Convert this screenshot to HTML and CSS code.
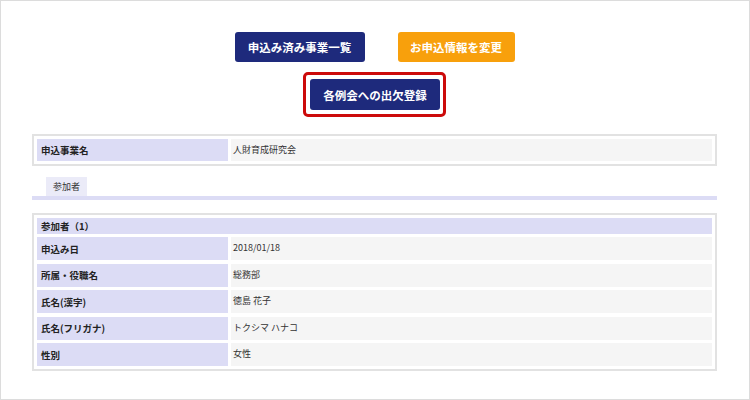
FILE: index.html
```html
<!DOCTYPE html>
<html lang="ja">
<head>
<meta charset="utf-8">
<link rel="stylesheet" href="styles.css">
</head>
<body>
<div class="frame">
  <div class="btn-row">
    <a class="btn btn-navy btn-list">申込み済み事業一覧</a>
    <a class="btn btn-orange">お申込情報を変更</a>
  </div>
  <div class="btn-row btn-row2">
    <div class="highlight">
      <a class="btn btn-navy btn-attend">各例会への出欠登録</a>
    </div>
  </div>

  <div class="box box-event">
    <div class="grid">
      <div class="label">申込事業名</div>
      <div class="value">人財育成研究会</div>
    </div>
  </div>

  <div class="tabs">
    <div class="tab">参加者</div>
  </div>
  <div class="tab-line"></div>

  <div class="box box-members">
    <div class="head">参加者（1）</div>
    <div class="grid rows">
      <div class="label">申込み日</div>
      <div class="value">2018/01/18</div>
      <div class="label">所属・役職名</div>
      <div class="value">総務部</div>
      <div class="label">氏名(漢字)</div>
      <div class="value">徳島 花子</div>
      <div class="label">氏名(フリガナ)</div>
      <div class="value">トクシマ ハナコ</div>
      <div class="label">性別</div>
      <div class="value">女性</div>
    </div>
  </div>
</div>
</body>
</html>
```

FILE: styles.css
```css
html, body {
  margin: 0;
  padding: 0;
  background: #fff;
}
body {
  font-family: "Noto Sans CJK JP", "Noto Sans", sans-serif;
  color: #333;
}
.frame {
  width: 750px;
  height: 400px;
  box-sizing: border-box;
  border: 1px solid #dcdcdc;
  padding: 31px 0 0 31px;
}
.btn-row {
  width: 685px;
  display: flex;
  justify-content: center;
  gap: 33px;
}
.btn-row2 {
  margin-top: 10px;
}
.btn {
  display: flex;
  align-items: center;
  justify-content: center;
  height: 30px;
  border-radius: 3px;
  color: #fff;
  font-weight: bold;
  font-size: 11.5px;
  text-decoration: none;
  box-sizing: border-box;
}
.btn-navy {
  background: #1e2a7c;
}
.btn-orange {
  background: #f8a00c;
  width: 117px;
}
.btn-list {
  width: 130px;
}
.highlight {
  border: 3px solid #cc0a0a;
  border-radius: 5px;
  padding: 4px 3px 4px 4px;
}
.btn-attend {
  width: 130px;
  height: 31px;
}
.box {
  width: 685px;
  box-sizing: border-box;
  border: 2px solid #e2e2e2;
  padding: 3px;
  font-size: 9px;
}
.box-event {
  margin-top: 17px;
}
.grid {
  display: grid;
  grid-template-columns: 191px 1fr;
  column-gap: 3px;
}
.label {
  background: #dcdcf5;
  font-weight: bold;
  font-size: 9.5px;
  color: #222;
  height: 22px;
  display: flex;
  align-items: center;
  padding-left: 4px;
}
.value {
  background: #f5f5f5;
  height: 22px;
  display: flex;
  align-items: center;
  padding-left: 2px;
  padding-bottom: 2px;
  box-sizing: border-box;
  color: #333;
}
.tabs {
  margin-top: 11px;
  padding-left: 14px;
  display: flex;
}
.tab {
  width: 41px;
  height: 19px;
  background: #ebebf8;
  font-size: 9px;
  display: flex;
  align-items: center;
  justify-content: center;
  color: #333;
}
.tab-line {
  width: 685px;
  height: 4px;
  background: #dcdcf5;
}
.box-members {
  margin-top: 13px;
}
.head {
  background: #dcdcf5;
  height: 16px;
  font-weight: bold;
  font-size: 9.5px;
  color: #222;
  display: flex;
  align-items: center;
  padding-left: 4px;
  margin-bottom: 3px;
}
.rows {
  row-gap: 3.5px;
}
.rows .label, .rows .value {
  height: 23px;
}
```
